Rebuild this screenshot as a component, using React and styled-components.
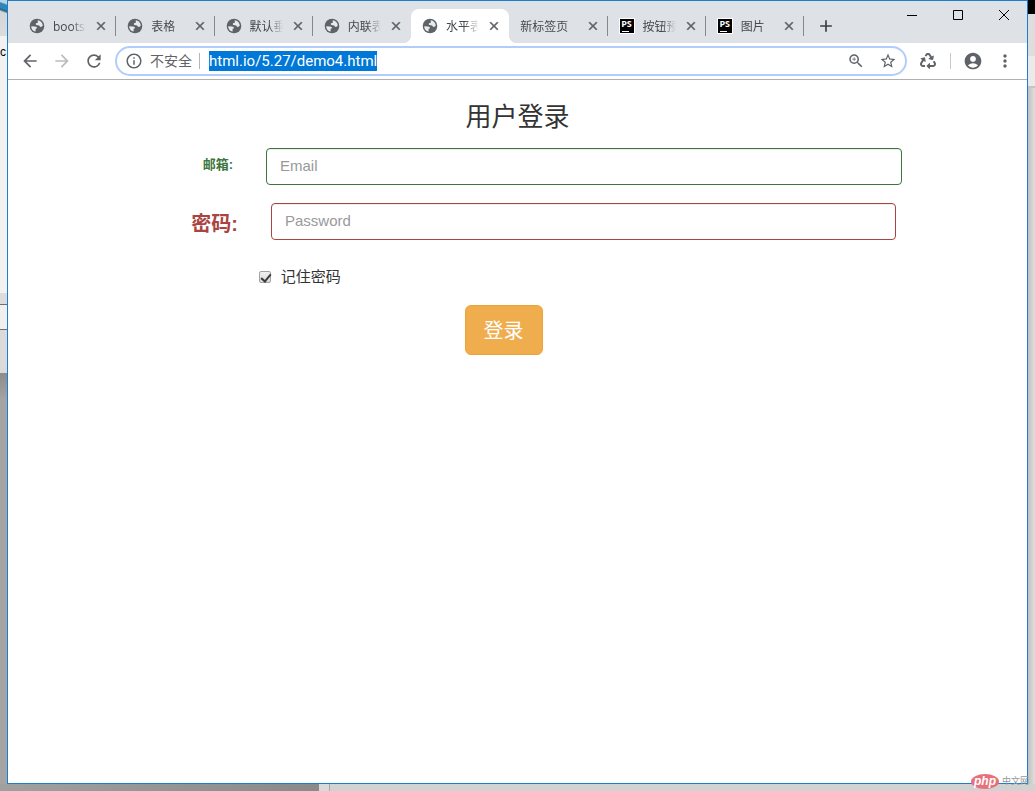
import React, { useEffect, useRef } from 'react';
import styled, { createGlobalStyle, css } from 'styled-components';
import {
  MdArrowBack,
  MdArrowForward,
  MdRefresh,
  MdInfoOutline,
  MdZoomIn,
  MdStarBorder,
  MdAccountCircle,
  MdMoreVert,
  MdAdd,
  MdClose,
} from 'react-icons/md';
import { FaRecycle } from 'react-icons/fa';

const tabs = [
  { title: 'bootstrap', icon: 'globe' },
  { title: '表格', icon: 'globe' },
  { title: '默认垂直', icon: 'globe' },
  { title: '内联表单', icon: 'globe' },
  { title: '水平表单', icon: 'globe', active: true },
  { title: '新标签页' },
  { title: '按钮预览', icon: 'ps' },
  { title: '图片', icon: 'ps' },
];

function GlobeIcon() {
  return (
    <svg width="16" height="16" viewBox="0 0 16 16" aria-hidden="true">
      <circle cx="8" cy="8" r="7.3" fill="#5f6368" />
      <path
        d="M2.2 8.2 L5.8 8.4 C7.4 8.5 8.2 9.2 8 10.3 L6.6 10.8 V13.6 C3.8 12.9 2.1 10.8 2.2 8.2Z"
        fill="#e8eaed"
      />
      <path
        d="M8.6 2.2 C11.6 2.5 13.7 4.8 13.8 7.6 C13 9 11.8 9.4 10.8 8.6 L10.2 7.4 L7.4 7 C6.4 6.2 6.7 5.2 7.8 5 L9 4.4 Z"
        fill="#e8eaed"
      />
    </svg>
  );
}

export default function App() {
  const address = useRef(null);

  useEffect(() => {
    address.current.focus();
    address.current.select();
  }, []);

  return (
    <Desktop>
      <GlobalStyle />
      <LeftEdge>
        <Peek />
        <EdgeText>c</EdgeText>
      </LeftEdge>
      <BrowserWindow>
        <TabStrip>
          <Tabs>
            {tabs.map((tab, i) => (
              <Tab
                key={tab.title}
                $active={tab.active}
                $divider={!tabs[i + 1]?.active}
              >
                {tab.icon === 'globe' && <GlobeIcon />}
                {tab.icon === 'ps' && <PsIcon>PS</PsIcon>}
                <TabTitle>{tab.title}</TabTitle>
                <CloseTab aria-label="关闭标签页">
                  <MdClose />
                </CloseTab>
              </Tab>
            ))}
          </Tabs>
          <NewTab aria-label="新标签页">
            <MdAdd />
          </NewTab>
          <WindowControls>
            <WindowButton aria-label="最小化">
              <svg width="10" height="10" viewBox="0 0 10 10">
                <path d="M0 5.5H10" />
              </svg>
            </WindowButton>
            <WindowButton aria-label="最大化">
              <svg width="10" height="10" viewBox="0 0 10 10">
                <path d="M0.5 0.5H9.5V9.5H0.5Z" />
              </svg>
            </WindowButton>
            <WindowButton aria-label="关闭">
              <svg width="10" height="10" viewBox="0 0 10 10">
                <path d="M0 0L10 10M10 0L0 10" />
              </svg>
            </WindowButton>
          </WindowControls>
        </TabStrip>

        <Toolbar>
          <ToolButton aria-label="后退">
            <MdArrowBack />
          </ToolButton>
          <ToolButton aria-label="前进" $muted>
            <MdArrowForward />
          </ToolButton>
          <ToolButton aria-label="重新加载">
            <MdRefresh />
          </ToolButton>
          <Omnibox>
            <MdInfoOutline size={18} />
            <Insecure>不安全</Insecure>
            <Address
              ref={address}
              aria-label="地址"
              defaultValue="html.io/5.27/demo4.html"
              spellCheck={false}
            />
            <ToolButton aria-label="缩放" $size="18px">
              <MdZoomIn />
            </ToolButton>
            <ToolButton aria-label="收藏" $size="18px">
              <MdStarBorder />
            </ToolButton>
          </Omnibox>
          <ToolButton aria-label="扩展程序" $size="16px">
            <FaRecycle />
          </ToolButton>
          <Divider />
          <ToolButton aria-label="用户">
            <MdAccountCircle />
          </ToolButton>
          <ToolButton aria-label="菜单">
            <MdMoreVert />
          </ToolButton>
        </Toolbar>

        <Page>
          <Title>用户登录</Title>
          <Form onSubmit={(e) => e.preventDefault()}>
            <FormRow $columns="225fr 636fr 92fr">
              <Label htmlFor="email" $tone="#3c763d">
                邮箱:
              </Label>
              <TextInput id="email" type="email" placeholder="Email" $tone="#3c763d" />
            </FormRow>
            <FormRow $columns="230fr 625fr 98fr">
              <Label htmlFor="password" $tone="#a94442" $large>
                密码:
              </Label>
              <TextInput
                id="password"
                type="password"
                placeholder="Password"
                $tone="#a94442"
              />
            </FormRow>
            <Remember>
              <CheckBox id="remember" type="checkbox" defaultChecked />
              <label htmlFor="remember">记住密码</label>
            </Remember>
            <Submit type="submit">登录</Submit>
          </Form>
        </Page>
      </BrowserWindow>
      <RightEdge />
      <BottomEdge />
      <Watermark>
        <Badge>php</Badge>
        <span>中文网</span>
      </Watermark>
    </Desktop>
  );
}

const GlobalStyle = createGlobalStyle`
  * {
    box-sizing: border-box;
  }
  body {
    margin: 0;
    font-family: 'Liberation Sans', 'Noto Sans CJK SC', sans-serif;
  }
  button {
    padding: 0;
    border: none;
    background: transparent;
    font-family: inherit;
    cursor: pointer;
  }
`;

const Desktop = styled.div`
  position: relative;
  display: grid;
  grid-template-columns: 7px 1fr 7px;
  grid-template-rows: 1fr 7px;
  min-height: 100vh;
  overflow: hidden;
  background: #dcdcdc;
`;

const LeftEdge = styled.div`
  overflow: hidden;
  background: linear-gradient(
    #f2f2f2 293px,
    #dcdcdc 293px 304px,
    #6e6e6e 304px 305px,
    #f0f0f0 305px 329px,
    #6e6e6e 329px 330px,
    #dadada 330px 373px,
    #8c8c8c 373px,
    #a4a4a4 400px
  );
`;

const Peek = styled.div`
  height: 36px;
  background: linear-gradient(
    200deg,
    #b9d3e2 10%,
    #2f86bd 14% 26%,
    #245f80 30%,
    #d4d6d7 36%,
    #dcdcdc
  );
`;

const EdgeText = styled.div`
  padding-top: 8px;
  font-size: 12px;
  line-height: 16px;
  color: #000;
`;

const BrowserWindow = styled.div`
  display: flex;
  flex-direction: column;
  min-width: 0;
  border: 1px solid #1a7fd0;
  background: #fff;
`;

const RightEdge = styled.div`
  background: linear-gradient(
      #000 14px,
      #dedede 14px 56px,
      #eaeaea 56px 86px,
      #c4c4c4 86px 88px,
      transparent 88px
    ),
    linear-gradient(90deg, #c2c2c2, #dedede);
`;

const BottomEdge = styled.div`
  grid-column: 1 / -1;
  background: linear-gradient(
    90deg,
    #a0a0a0,
    #8a8a8a 319px,
    #dadada 319px 329px,
    #a8a8a8 329px 330px,
    #d2d2d2 330px
  );
`;

const TabStrip = styled.div`
  display: flex;
  align-items: flex-start;
  height: 42px;
  padding-left: 10px;
  background: #dee1e6;
`;

const Tabs = styled.div`
  display: grid;
  grid-template-columns: repeat(8, minmax(0, 1fr));
  flex: 0 1 786px;
  min-width: 0;
  padding-top: 8px;
`;

const Tab = styled.div`
  position: relative;
  display: flex;
  align-items: center;
  gap: 8px;
  height: 34px;
  padding: 0 8px 0 11px;
  color: #45494d;

  > svg {
    flex: none;
  }

  ${({ $divider }) =>
    $divider &&
    css`
      &::after {
        content: '';
        position: absolute;
        right: 0;
        top: 7px;
        width: 1px;
        height: 20px;
        background: #85888d;
      }
    `}

  ${({ $active }) =>
    $active &&
    css`
      border-radius: 8px 8px 0 0;
      background: #fff;

      &::before,
      &::after {
        content: '';
        position: absolute;
        top: auto;
        bottom: 0;
        width: 8px;
        height: 8px;
      }
      &::before {
        left: -8px;
        background: radial-gradient(circle at 0 0, transparent 8px, #fff 8px);
      }
      &::after {
        right: -8px;
        background: radial-gradient(circle at 100% 0, transparent 8px, #fff 8px);
      }
    `}
`;

const TabTitle = styled.span`
  flex: 1;
  padding-top: 2px;
  overflow: hidden;
  white-space: nowrap;
  font: 12px/18px 'Open Sans', 'Noto Sans CJK SC', sans-serif;
  mask-image: linear-gradient(90deg, #000 calc(100% - 14px), transparent);
`;

const CloseTab = styled.button`
  display: flex;
  flex: none;
  font-size: 14px;
  color: #5f6368;

  path:not([fill='none']) {
    stroke-width: 1px;
  }
`;

const PsIcon = styled.span`
  position: relative;
  flex: none;
  width: 16px;
  height: 16px;
  border: 1px solid #fff;
  background: #000;
  color: #fff;
  font: bold 9px/10px 'Open Sans', sans-serif;
  text-align: center;

  &::after {
    content: '';
    position: absolute;
    left: 2px;
    bottom: 1px;
    width: 7px;
    height: 1px;
    background: #fff;
  }
`;

const NewTab = styled.button`
  display: flex;
  padding: 15px 12px 0;
  font-size: 20px;
  color: #3c4043;
`;

const WindowControls = styled.div`
  display: flex;
  margin-left: auto;
`;

const WindowButton = styled.button`
  display: flex;
  align-items: center;
  justify-content: center;
  width: 46px;
  height: 28px;

  svg {
    fill: none;
    stroke: #000;
  }
`;

const Toolbar = styled.div`
  display: flex;
  align-items: center;
  height: 37px;
  padding: 0 6px;
  border-bottom: 1px solid #b0b0b0;
`;

const ToolButton = styled.button`
  display: flex;
  align-items: center;
  justify-content: center;
  flex: none;
  width: 32px;
  height: 28px;
  font-size: ${({ $size }) => $size || '20px'};
  color: ${({ $muted }) => ($muted ? '#babcbe' : '#5f6368')};
`;

const Omnibox = styled.div`
  display: flex;
  align-items: center;
  flex: 1;
  min-width: 0;
  height: 30px;
  margin: 0 5px;
  padding: 0 1px 0 8px;
  border: 2px solid #b0cdfb;
  border-radius: 15px;
  color: #5f6368;
`;

const Insecure = styled.span`
  flex: none;
  margin: 0 9px 0 7px;
  padding: 0 7px 2px 0;
  border-right: 1px solid #b4b6b9;
  font: 14px/14px 'Noto Sans CJK SC', sans-serif;
`;

const Address = styled.input`
  flex: 1;
  min-width: 0;
  padding: 0;
  border: none;
  outline: none;
  font: 15px/20px Roboto, sans-serif;
  color: #202124;

  &::selection {
    background: #0078d7;
    color: #fff;
  }
`;

const Divider = styled.span`
  width: 1px;
  height: 16px;
  margin: 0 6px;
  background: #c8cacd;
`;

const Page = styled.main`
  flex: 1;
  padding-top: 21px;
  color: #333;
`;

const Title = styled.h3`
  margin: 0 0 15px;
  font-size: 26px;
  font-weight: 400;
  line-height: 32px;
  text-align: center;
`;

const Form = styled.form`
  display: flex;
  flex-direction: column;
  gap: 18px;
`;

const FormRow = styled.div`
  display: grid;
  grid-template-columns: ${({ $columns }) => $columns};
  column-gap: 33px;
`;

const Label = styled.label`
  padding-top: ${({ $large }) => ($large ? '9px' : '8px')};
  font-size: ${({ $large }) => ($large ? '20px' : '13px')};
  line-height: ${({ $large }) => ($large ? '24px' : '18px')};
  font-weight: 700;
  text-align: right;
  color: ${({ $tone }) => $tone};
`;

const TextInput = styled.input`
  width: 100%;
  height: 37px;
  padding: 5px 13px 7px;
  border: 1px solid ${({ $tone }) => $tone};
  border-radius: 4px;
  box-shadow: inset 0 1px 1px rgba(0, 0, 0, 0.075);
  font-family: inherit;
  font-size: 15px;

  &::placeholder {
    color: #999;
  }
`;

const Remember = styled.div`
  display: flex;
  align-items: center;
  gap: 10px;
  padding: 8px 0 0 25%;
  font-size: 15px;
  line-height: 21px;
`;

const CheckBox = styled.input`
  appearance: none;
  width: 12px;
  height: 12px;
  margin: 0 0 0 -4px;
  border: 1px solid #a2a2a2;
  border-radius: 2px;
  background: linear-gradient(#f0f0f0, #dcdcdc);

  &:checked::after {
    content: '';
    display: block;
    width: 4px;
    height: 8px;
    margin-left: 3px;
    border: solid #3c3c3c;
    border-width: 0 2px 2px 0;
    transform: rotate(40deg);
  }
`;

const Submit = styled.button`
  align-self: flex-start;
  height: 50px;
  margin-left: 44.8%;
  padding: 0 18px 2px;
  border: 1px solid #eea236;
  border-radius: 6px;
  background: #f0ad4e;
  color: #fff;
  font-size: 20px;
`;

const Watermark = styled.div`
  position: absolute;
  right: 6px;
  bottom: 2px;
  display: flex;
  align-items: center;
  gap: 3px;
  color: #999;
  font-size: 9px;
  line-height: 16px;
`;

const Badge = styled.span`
  padding: 0 3px;
  border-radius: 50%;
  background: #e8707a;
  color: #fff;
  font: italic bold 12px/15px 'Liberation Sans', sans-serif;
`;
